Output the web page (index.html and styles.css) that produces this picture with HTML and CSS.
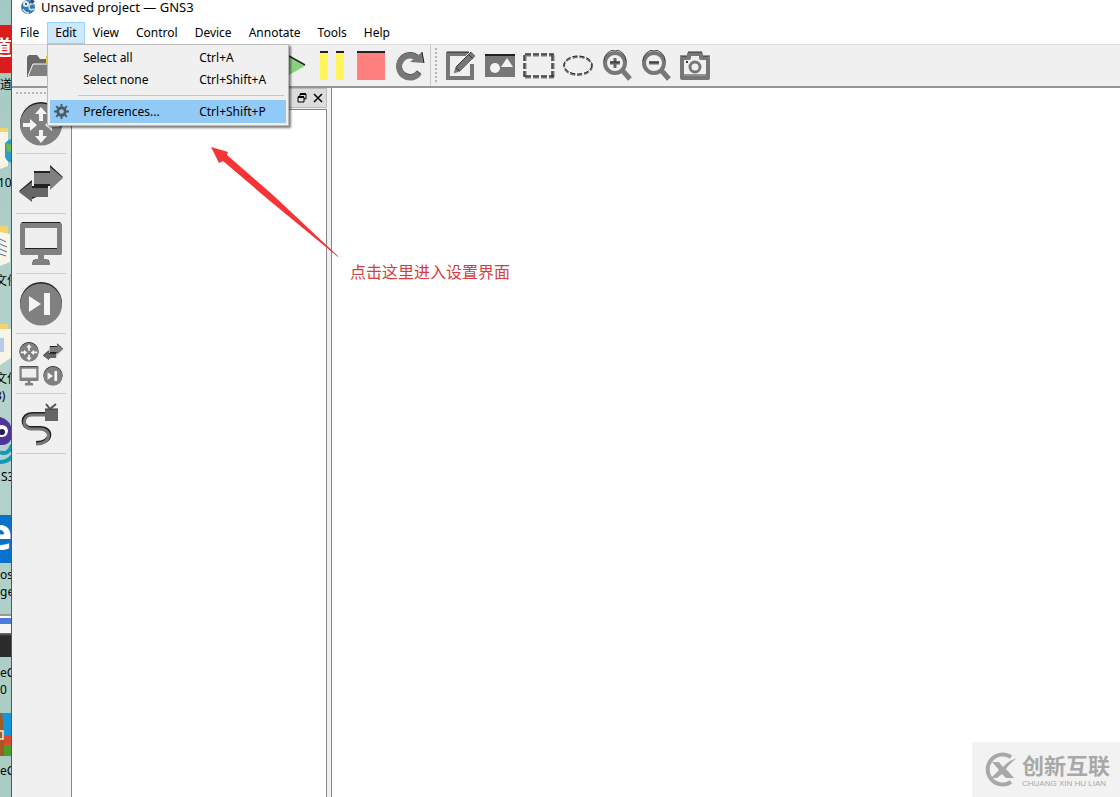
FILE: index.html
```
<!DOCTYPE html>
<html lang="en">
  <head>
    <meta charset="utf-8">
    <title>Unsaved project — GNS3</title>
    <link rel="stylesheet" href="styles.css">
  </head>
  <body>
    <!-- shared device shapes, used large and small in the device bar -->
    <svg class="defs" aria-hidden="true">
      <symbol id="router" viewBox="0 0 44 44">
        <circle cx="22" cy="21" r="21" fill="#222"/>
        <circle cx="22" cy="22.500" r="21" fill="#808080"/>
        <path fill="#f4f4f4" d="M22 5l6 7h-4v7h-4v-7h-4zM22 41l6-7h-4v-6h-4v6h-4zM18 23l-7 6v-4H4v-4h7v-4zM26 23l7 6v-4h7v-4h-7v-4z"/>
      </symbol>
      <symbol id="switch" viewBox="0 0 44 44">
        <path fill="#222" d="M15 9h16V3l13 12-13 9H15z"/>
        <path fill="#808080" d="M15 11h16V5l13 11-13 12v-6H15z"/>
        <path fill="#222" d="M29 30V24H13v-6L0 29l13 8z"/>
        <path fill="#666" d="M29 26H13v-6L0 30l13 10v-5h16z"/>
      </symbol>
      <symbol id="screen" viewBox="0 0 44 44">
        <path fill="#222" d="M3 0h38l2 3H1zM14 38h16v3H14z"/>
        <rect x="1" y="1" width="42" height="32" rx="2" fill="#808080"/>
        <rect x="6" y="6" width="32" height="21" fill="#eee"/>
        <path stroke="#222" d="M6 26.500h32"/>
        <path fill="#808080" d="M19 33h6v4h3l3 3v3H13v-3l3-3h3z"/>
      </symbol>
      <symbol id="next" viewBox="0 0 44 44">
        <circle cx="22" cy="21" r="21" fill="#222"/>
        <circle cx="22" cy="22.500" r="21" fill="#808080"/>
        <path fill="#f4f4f4" d="M10 14l12 8-12 8zM25 11h6v22h-6z"/>
      </symbol>
    </svg>

    <div class="desktop">
      <div class="shortcut red">道</div>
      <span class="label label-1">道</span>
      <svg class="shortcut folder-1" viewBox="0 0 12 42"><path fill="#f3d36b" d="M0 0h8v4H0z"/><path fill="#f7f5e8" d="M0 4h8v34l-8 3z"/><path fill="#2e9bd0" d="M5 15q4-4 7-4v24q-5-1-7-6z"/><path fill="#75b843" d="M6 15l6 2v8l-5-2z"/></svg>
      <span class="label label-2">10</span>
      <svg class="shortcut folder-2" viewBox="0 0 12 42"><path fill="#f3d36b" d="M0 0h8v10H0z"/><path fill="#f7f5e8" d="M0 6l10 2v28l-10 4z"/><path stroke="#3f6ea8" d="M0 13l6 3M0 18l7 3M0 23l7 3M0 28l6 2"/></svg>
      <span class="label label-3">文件</span>
      <svg class="shortcut folder-3" viewBox="0 0 12 42"><path fill="#f3d36b" d="M0 0h8v5H0z"/><path fill="#f7f5e8" d="M0 5h12v28l-12 8z"/><path fill="#b6cce4" d="M0 14h4v14H0z"/></svg>
      <span class="label label-4">文件<br>3)</span>
      <svg class="shortcut gns" viewBox="0 0 12 50"><path fill="#4f359b" d="M0 1q12 3 12 16T0 29z"/><circle cx="2" cy="15" r="6" fill="#fff"/><circle cx="2" cy="16" r="3" fill="#251b5a"/><path fill="none" stroke="#1598b8" stroke-width="4" d="M0 36q8 4 12-7M0 46q8 0 12-6"/></svg>
      <span class="label label-5">S3</span>
      <div class="shortcut edge">e</div>
      <span class="label label-6">os<br>ge</span>
      <div class="shortcut console"></div>
      <span class="label label-7">eC<br>0</span>
      <svg class="shortcut archive" viewBox="0 0 12 43"><path fill="#1696d8" d="M0 0h12v23H0z"/><path fill="#d74b2e" d="M0 22h12v11H0z"/><path fill="#4c9e2c" d="M0 32h12v11H0z"/><path fill="#a35b23" d="M0 0h2l2 18v25H0z"/><path fill="none" stroke="#eee" stroke-width="1.500" d="M0 18h3v8H0"/></svg>
      <span class="label label-8">eC</span>
    </div>

    <div class="window">
      <header class="titlebar">
        <svg class="logo" viewBox="0 0 16 16"><circle cx="8" cy="8" r="7" fill="#3478ac"/><circle cx="6" cy="5" r="3" fill="#dcecf5"/><circle cx="6" cy="5" r="1" fill="#20305f"/><path fill="none" stroke="#cde7f2" stroke-width="1.500" d="M14 5q-5-1-5 3t5 2M3 10q2 4 6 4"/><path fill="#29407e" d="M10 0l5 2-3 3z"/></svg>
        <span>Unsaved project — GNS3</span>
      </header>

      <nav class="menubar">
        <button>File</button>
        <div class="menu-holder">
          <button class="open" aria-expanded="true">Edit</button>
          <div class="dropdown">
            <button class="item"><span></span><span>Select all</span><span>Ctrl+A</span></button>
            <button class="item"><span></span><span>Select none</span><span>Ctrl+Shift+A</span></button>
            <div class="divider"></div>
            <button class="item selected">
              <svg class="gear" viewBox="0 0 16 16"><circle cx="8" cy="8" r="4" fill="none" stroke="#4d5961" stroke-width="3"/><path stroke="#4d5961" stroke-width="2" d="M8 0v3M8 13v3M0 8h3M13 8h3M2.300 2.300l2.200 2.200M11.500 11.500l2.200 2.200M2.300 13.700l2.200-2.200M11.500 4.500l2.200-2.200"/></svg>
              <span>Preferences...</span><span>Ctrl+Shift+P</span>
            </button>
          </div>
        </div>
        <button>View</button>
        <button>Control</button>
        <button>Device</button>
        <button>Annotate</button>
        <button>Tools</button>
        <button>Help</button>
      </nav>

      <div class="toolbar">
        <div class="tools tools-file">
          <button aria-label="Open project"><svg viewBox="0 0 32 32"><path fill="#686868" d="M2 7l2-2h8l3 4h11v6H9L3 27H2z"/><path fill="#808080" d="M9 14h22l-5 12H3z"/><path fill="none" stroke="#fff" d="M3 26L8 14h22"/><path fill="#e9cf3f" d="M21 6l9 1v6h-9z"/></svg></button>
        </div>
        <div class="tools tools-run">
          <button aria-label="Start"><svg viewBox="0 0 32 32"><path fill="#87d37c" d="M3 2l25 14L3 30z"/><path stroke="#222" stroke-width="1.500" d="M3 1l25 14"/></svg></button>
          <button aria-label="Suspend"><svg viewBox="0 0 32 32"><path fill="#fff45c" d="M4 2h8v28H4zM20 2h8v28h-8z"/><path fill="#222" d="M4 1h8v2H4zM20 1h8v2h-8z"/></svg></button>
          <button aria-label="Stop"><svg viewBox="0 0 32 32"><path fill="#ff7f7f" d="M2 2h28v28H2z"/><path fill="#222" d="M2 1h28v2H2z"/></svg></button>
          <button aria-label="Reload"><svg viewBox="0 0 32 32"><path fill="none" stroke="#333" stroke-width="5" d="M23 7A11 11 0 1 0 25 22"/><path fill="none" stroke="#777" stroke-width="6" d="M23 8A11 11 0 1 0 25 23"/><path fill="#777" d="M28 2l2 11-14-1z"/><path stroke="#222" d="M28 2l2 11"/></svg></button>
        </div>
        <div class="tools tools-draw">
          <span class="grip"></span>
          <button aria-label="Add note"><svg viewBox="0 0 32 32"><path fill="none" stroke="#777" stroke-width="4" d="M25 4H3v24h24V14"/><path stroke="#222" d="M2 2h22"/><path fill="#777" stroke="#eee" d="M10 17L26 1l5 5-16 16-7 2z"/><path stroke="#333" d="M11 17L26 2M23 4l5 5M11 18l4 3"/></svg></button>
          <button aria-label="Insert picture"><svg viewBox="0 0 32 32"><path fill="#777" d="M1 5h30v22H1z"/><path fill="#222" d="M1 4h30v2H1z"/><circle cx="11" cy="18" r="5" fill="#f4f4f4"/><path fill="#f4f4f4" d="M23 8l6 9H17z"/></svg></button>
          <button aria-label="Draw rectangle"><svg viewBox="0 0 32 32"><path fill="none" stroke="#777" stroke-width="3" stroke-dasharray="6 2" d="M2 5h29M2 27h29M2 5v22M30 5v22"/><path fill="none" stroke="#222" stroke-dasharray="6 2" d="M2 4h29M2 26h29M1 5v22M29 5v22"/></svg></button>
          <button aria-label="Draw ellipse"><svg viewBox="0 0 32 32"><ellipse cx="16" cy="16" rx="14" ry="9" fill="none" stroke="#777" stroke-width="2" stroke-dasharray="5 2"/><ellipse cx="16" cy="15" rx="14" ry="9" fill="none" stroke="#222" stroke-dasharray="5 2"/></svg></button>
          <button aria-label="Zoom in"><svg viewBox="0 0 32 32"><circle cx="14" cy="13" r="10" fill="none" stroke="#777" stroke-width="4"/><path fill="none" stroke="#444" d="M3 11A11 11 0 0 1 25 11"/><path stroke="#777" stroke-width="5" d="M21 20l8 9"/><path stroke="#666" stroke-width="3" d="M14 8v10M9 13h10"/><path stroke="#222" d="M9 12h10"/></svg></button>
          <button aria-label="Zoom out"><svg viewBox="0 0 32 32"><circle cx="14" cy="13" r="10" fill="none" stroke="#777" stroke-width="4"/><path fill="none" stroke="#444" d="M3 11A11 11 0 0 1 25 11"/><path stroke="#777" stroke-width="5" d="M21 20l8 9"/><path stroke="#666" stroke-width="3" d="M9 13h10"/><path stroke="#222" d="M9 12h10"/></svg></button>
          <button aria-label="Screenshot"><svg viewBox="0 0 32 32"><path fill="none" stroke="#777" stroke-width="4" stroke-linejoin="round" d="M3 8h7V4h12v4h7v20H3z"/><path fill="none" stroke="#333" d="M1 6h7M9 2h14M24 6h7M5 25h22"/><circle cx="16" cy="17" r="5" fill="none" stroke="#777" stroke-width="3"/><path fill="#333" d="M7 11h2v2H7z"/></svg></button>
        </div>
      </div>

      <main class="workspace">
        <aside class="devices">
          <span class="grip grip-row"></span>
          <button aria-label="Routers"><svg><use href="#router"/></svg></button>
          <button aria-label="Switches"><svg><use href="#switch"/></svg></button>
          <button aria-label="End devices"><svg><use href="#screen"/></svg></button>
          <button aria-label="Security devices"><svg><use href="#next"/></svg></button>
          <button class="all" aria-label="All devices">
            <svg><use href="#router"/></svg>
            <svg><use href="#switch"/></svg>
            <svg><use href="#screen"/></svg>
            <svg><use href="#next"/></svg>
          </button>
          <button aria-label="Add a link"><svg viewBox="0 0 44 44"><path fill="none" stroke="#222" stroke-width="4" d="M27 12H13C2 12 2 26 12 26h9c13 0 13 15-4 15"/><path fill="none" stroke="#777" stroke-width="3" d="M27 13H13C3 13 3 27 12 27h9c12 0 12 15-4 15"/><path fill="#666" d="M26 7h13v12H26z"/><path stroke="#333" d="M26 7h13"/><path fill="none" stroke="#555" stroke-width="2" d="M27 2l4 5 6-5"/></svg></button>
        </aside>

        <section class="dock">
          <div class="dock-title">
            <button aria-label="Float"><svg viewBox="0 0 10 10"><path fill="none" stroke="#000" d="M3 3V1h6v5H7M1 4h6v5H1z"/><path stroke="#000" stroke-width="2" d="M3 1h6M1 4h6"/></svg></button>
            <button aria-label="Close"><svg viewBox="0 0 10 10"><path stroke="#000" stroke-width="1.500" d="M1 1l8 8M9 1L1 9"/></svg></button>
          </div>
          <div class="dock-list"></div>
        </section>

        <section class="canvas">
          <p class="note">点击这里进入设置界面</p>
          <div class="watermark">
            <svg viewBox="0 0 36 36"><path fill="none" stroke="#a8a8a8" stroke-width="4" d="M29 5A15 15 0 1 0 29 30"/><path fill="#a8a8a8" d="M10 10h7l4 5q5-6 14-9-8 6-11 11l8 9h-8l-4-4-5 4H9l8-8z"/></svg>
            <div>
              <div class="brand">创新互联</div>
              <div class="brand-latin">CHUANG XIN HU LIAN</div>
            </div>
          </div>
        </section>
      </main>
    </div>

    <svg class="arrow" viewBox="0 0 130 112"><path fill="#f53535" d="M1 1l17 5-1 3 47 41 64 60v1L60 55 13 15l-4 2z"/></svg>
  </body>
</html>
```
FILE: styles.css
```
* {
  box-sizing: border-box;
}
body {
  margin: 0;
  display: flex;
  height: 100vh;
  overflow: hidden;
  position: relative;
  background-color: #fff;
  color: #000;
  font-family: "Noto Sans", "Noto Sans CJK SC", sans-serif;
  font-size: 12px;
}
button {
  border: 0;
  margin: 0;
  padding: 0;
  background: none;
  font: inherit;
  color: inherit;
}
svg {
  display: block;
}
.defs {
  position: absolute;
  width: 0;
  height: 0;
}

/* desktop behind the window */
.desktop {
  position: relative;
  flex: 0 0 11px;
  overflow: hidden;
  background: linear-gradient(#a4c8c2, #b5d3cc 50%, #a9ccc5);
}
.shortcut,
.label {
  position: absolute;
  left: 0;
  width: 12px;
}
.label {
  line-height: 17px;
  white-space: nowrap;
}
.red {
  top: 25px;
  height: 48px;
  background-color: #d91c1c;
  color: #fff;
  font-size: 20px;
  font-weight: bold;
  line-height: 46px;
  text-indent: -8px;
}
.label-1 { top: 76px; }
.folder-1 { top: 128px; height: 42px; }
.label-2 { top: 174px; left: -2px; }
.folder-2 { top: 226px; height: 42px; }
.label-3 { top: 272px; left: -5px; }
.folder-3 { top: 324px; height: 42px; }
.label-4 { top: 370px; left: -5px; }
.gns { top: 416px; height: 50px; }
.label-5 { top: 468px; left: 1px; }
.edge {
  top: 515px;
  height: 48px;
  background-color: #0b72c9;
  color: #fff;
  font-size: 44px;
  font-weight: bold;
  line-height: 36px;
  text-indent: -14px;
}
.label-6 { top: 566px; }
.console {
  top: 614px;
  height: 43px;
  border-top: 2px solid #999;
  background: linear-gradient(#fff 2px, #4f7be0 2px, #4f7be0 8px, #f5f5f5 8px, #f5f5f5 17px, #777 17px, #2b2b2b 20px);
}
.label-7 { top: 664px; }
.archive { top: 713px; height: 43px; }
.label-8 { top: 762px; }

.window {
  flex: 1;
  min-width: 0;
  display: flex;
  flex-direction: column;
  border-left: 1px solid #4c5c5a;
}
.titlebar {
  display: flex;
  align-items: center;
  gap: 5px;
  height: 22px;
  padding: 0 8px 9px;
  font-size: 13px;
  line-height: 16px;
}
.logo {
  width: 16px;
  height: 16px;
}
.menubar {
  display: flex;
  height: 22px;
}
.menubar button {
  padding-bottom: 2px;
}
.menubar > button,
.menu-holder > button {
  height: 22px;
  padding: 0 8px 2px;
}
.menu-holder ~ button {
  margin-right: 1px;
}
.menu-holder {
  position: relative;
}
.menubar .open {
  background-color: #cce8ff;
  border: 1px solid #99d1ff;
  padding: 0 7px 2px;
}
.dropdown {
  position: absolute;
  z-index: 2;
  top: 22px;
  left: 0;
  width: 242px;
  padding: 2px;
  background-color: #f0f0f0;
  border: 1px solid #bbb;
  box-shadow: 2px 2px 2px rgba(0, 0, 0, 0.5);
}
.item {
  display: grid;
  grid-template-columns: 33px 116px 1fr;
  align-items: center;
  width: 100%;
  height: 22px;
  text-align: left;
}
.item.selected {
  height: 23px;
  padding-bottom: 0;
  background-color: #91c9f7;
}
.gear {
  width: 15px;
  height: 15px;
  margin-left: 4px;
}
.divider {
  height: 1px;
  margin: 4px 2px 4px 28px;
  background-color: #c5c5c5;
}

.toolbar {
  display: flex;
  height: 44px;
  border-top: 1px solid #ddd;
  border-bottom: 2px solid #969696;
  background-color: #f0f0f0;
}
.tools {
  display: flex;
  align-items: center;
}
.tools button {
  width: 39px;
  display: flex;
  justify-content: center;
}
.tools svg {
  width: 32px;
  height: 32px;
}
.tools-file {
  flex: 0 0 261px;
  padding-left: 9px;
}
.tools-run {
  padding-right: 1px;
  border-right: 1px solid #c8c8c8;
}
.grip {
  width: 2px;
  height: 36px;
  margin: 0 4px;
  background: repeating-linear-gradient(#b5b5b5 0 2px, transparent 2px 4px);
}
.grip-row {
  width: 50px;
  height: 2px;
  margin: 4px 0 0;
  background: repeating-linear-gradient(90deg, #b5b5b5 0 2px, transparent 2px 4px);
}

.workspace {
  flex: 1;
  min-height: 0;
  display: flex;
  background-color: #f0f0f0;
}
.devices {
  flex: 0 0 60px;
  display: flex;
  flex-direction: column;
  align-items: center;
  padding-right: 1px;
  border-right: 1px solid #828790;
}
.devices button {
  display: flex;
  justify-content: center;
  align-items: center;
  width: 50px;
  height: 60px;
  border-bottom: 1px solid #ccc;
}
.devices svg {
  width: 44px;
  height: 44px;
}
.devices .all {
  display: grid;
  grid-template-columns: 20px 20px;
  gap: 4px;
  align-content: center;
}
.devices .all svg {
  width: 20px;
  height: 20px;
}
.dock {
  flex: 0 0 255px;
  display: flex;
  flex-direction: column;
}
.dock-title {
  display: flex;
  justify-content: flex-end;
  align-items: center;
  gap: 6px;
  height: 20px;
  padding-right: 3px;
  border: 1px solid #bbb;
  background-color: #dcdcdc;
}
.dock-title svg {
  width: 10px;
  height: 10px;
}
.dock-list {
  flex: 1;
  margin-top: 1px;
  border-top: 1px solid #828790;
  border-right: 1px solid #828790;
  background-color: #fff;
}
.canvas {
  flex: 1;
  position: relative;
  margin-left: 4px;
  border-left: 1px solid #828790;
  background-color: #fff;
}

/* annotations over the window */
.note {
  margin: 171px 0 0 18px;
  color: #d93a3a;
  font-family: "Noto Sans CJK SC", sans-serif;
  font-size: 16px;
  line-height: 24px;
}
.arrow {
  position: absolute;
  top: 146px;
  left: 210px;
  width: 130px;
  height: 112px;
}
.watermark {
  position: absolute;
  right: 0;
  bottom: 0;
  display: flex;
  align-items: center;
  gap: 4px;
  padding: 8px 10px 8px 10px;
  background-color: #f2f2f2;
  color: #a8a8a8;
}
.watermark svg {
  width: 36px;
  height: 36px;
}
.brand {
  font-family: "Noto Sans CJK SC", sans-serif;
  font-size: 22px;
  font-weight: bold;
  line-height: 29px;
}
.brand-latin {
  font-family: "Liberation Sans", sans-serif;
  font-size: 8px;
  line-height: 10px;
}
```
